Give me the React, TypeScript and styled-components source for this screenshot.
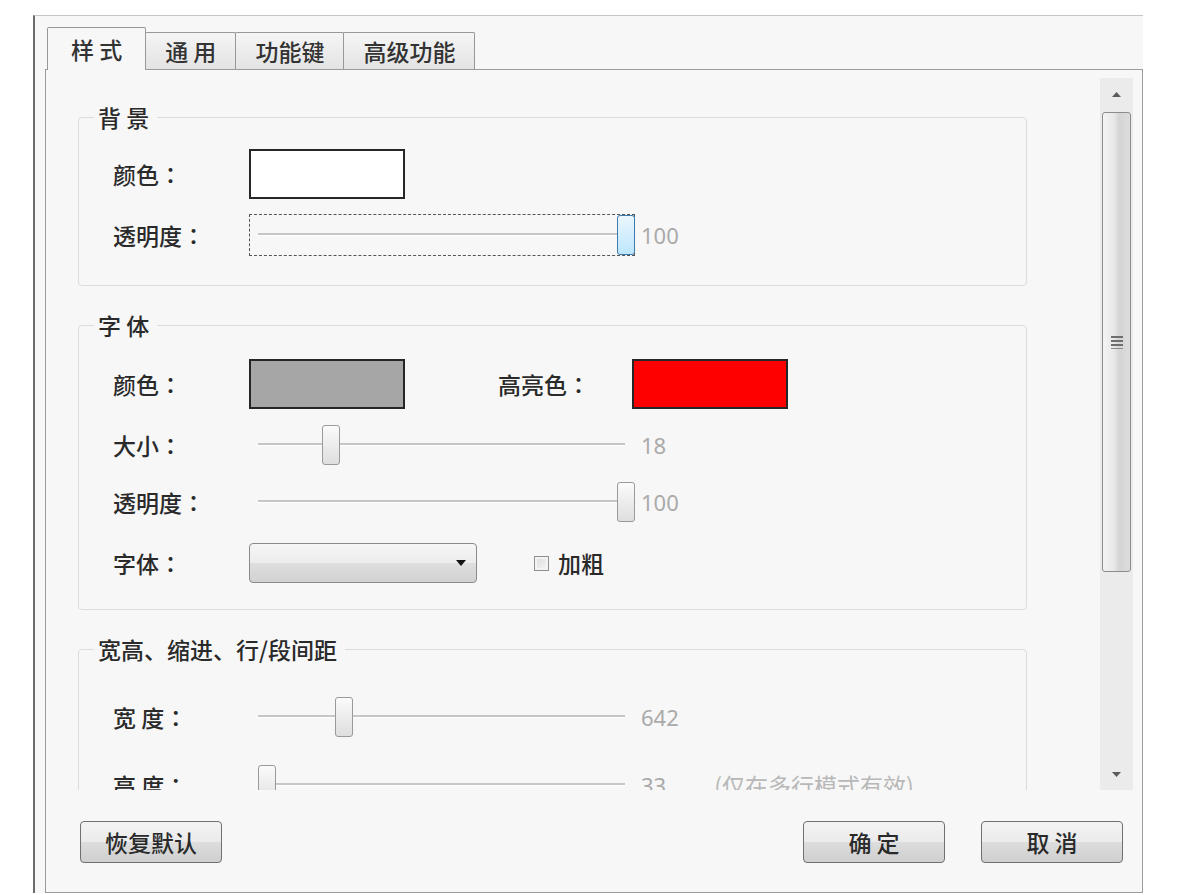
import styled, { createGlobalStyle } from "styled-components";

const GlobalStyle=createGlobalStyle`
    *{
        box-sizing: border-box;
    }
    html, body{
        margin: 0;
        padding: 0;
        background: #fff;
    }
    body{
        font-family: "Noto Sans CJK SC", "Noto Sans", sans-serif;
        color: #2a2a2a;
    }
`;

const Page=styled.div`
    width: 1179px;
    height: 895px;
    padding: 15px 0 0 33px;
    overflow: hidden;
`;

const Window=styled.div`
    width: 1110px;
    height: 878px;
    background: #f7f7f7;
    border-left: 2px solid #6a6a6a;
    border-top: 1px solid #c6c6c6;
    padding: 11px 0 0 10px;
    display: flex;
    flex-direction: column;
`;

const TabBar=styled.div`
    display: flex;
    align-items: flex-end;
    height: 43px;
    margin-bottom: -1px;
    padding-left: 2px;
`;

const Tab=styled.div<{ $active?: boolean }>`
    height: ${(p)=>p.$active ? "43px" : "37px"};
    margin-bottom: ${(p)=>p.$active ? "0" : "1px"};
    margin-left: ${(p)=>p.$active ? "0" : "-1px"};
    padding: 0 ${(p)=>p.$active ? "23px" : "19px"};
    border: 1px solid #989898;
    border-bottom: none;
    border-radius: 2px 2px 0 0;
    background: ${(p)=>p.$active ? "#f7f7f7" : "linear-gradient(#f5f5f5, #e3e3e3)"};
    position: relative;
    z-index: ${(p)=>p.$active ? 2 : 1};
    display: flex;
    align-items: center;
    font-size: 23px;
    font-weight: 500;
    color: #333;
    white-space: pre;
`;

const Panel=styled.div`
    flex: 1;
    border: 1px solid #9b9b9b;
    background: #f7f7f7;
    display: flex;
    flex-direction: column;
`;

const ScrollRow=styled.div`
    display: flex;
    height: 712px;
    margin: 8px 9px 0 0;
`;

const ScrollContent=styled.div`
    flex: 1;
    overflow: hidden;
    padding: 24px 73px 0 32px;
    display: flex;
    flex-direction: column;
    gap: 24px;
`;

const Group=styled.fieldset<{ $pt: number; $pb: number; $gap: number }>`
    margin: 0;
    min-width: 0;
    flex-shrink: 0;
    padding: ${(p)=>p.$pt}px 20px ${(p)=>p.$pb}px 34px;
    border: 1px solid #dcdcdc;
    border-radius: 4px;
    display: flex;
    flex-direction: column;
    gap: ${(p)=>p.$gap}px;
`;

const Legend=styled.legend`
    margin-left: -19px;
    padding: 0 8px 0 4px;
    font-size: 23px;
    font-weight: 500;
    line-height: 30px;
    color: #2a2a2a;
    white-space: pre;
`;

const Row=styled.div<{ $h: number }>`
    display: flex;
    align-items: center;
    height: ${(p)=>p.$h}px;
`;

const LabelText=styled.span<{ $w?: number; $ml?: number }>`
    width: ${(p)=>p.$w ?? 136}px;
    margin-left: ${(p)=>p.$ml ?? 0}px;
    flex-shrink: 0;
    font-size: 23px;
    font-weight: 500;
    color: #2a2a2a;
    white-space: pre;
`;

// 全角冒号居中显示
const Colon=styled.span`
    font-family: "Noto Sans CJK TC", "Noto Sans CJK SC", sans-serif;
`;

const ColorBox=styled.div<{ $color: string }>`
    width: 156px;
    height: 50px;
    flex-shrink: 0;
    border: 2px solid #262626;
    background: ${(p)=>p.$color};
`;

const SliderBox=styled.div<{ $focus?: boolean }>`
    position: relative;
    width: 386px;
    height: 42px;
    flex-shrink: 0;
    outline: ${(p)=>p.$focus ? "1px dashed #555" : "none"};
    outline-offset: -1px;
`;

const Track=styled.div`
    position: absolute;
    left: 9px;
    right: 10px;
    top: 19px;
    height: 2px;
    background: #c6c6c6;
    box-shadow: 0 1px 0 #fff;
`;

const Thumb=styled.div<{ $focus?: boolean }>`
    position: absolute;
    top: 1px;
    width: 18px;
    height: 40px;
    border: 1px solid ${(p)=>p.$focus ? "#3d7bad" : "#9a9a9a"};
    border-radius: 3px;
    background: ${(p)=>p.$focus
        ? "linear-gradient(#eaf6fd, #bee6fd)"
        : "linear-gradient(#fbfbfb, #dedede)"};
`;

const Value=styled.span`
    margin-left: 6px;
    font-family: "Noto Sans", "Open Sans", sans-serif;
    font-size: 22px;
    color: #aaa;
`;

const Hint=styled.span`
    margin-left: 48px;
    font-size: 23px;
    color: #b8b8b8;
`;

const Select=styled.div`
    width: 228px;
    height: 40px;
    flex-shrink: 0;
    border: 1px solid #8a8a8a;
    border-radius: 4px;
    background: linear-gradient(#f6f6f6 0%, #ececec 50%, #dedede 51%, #d2d2d2 100%);
    display: flex;
    align-items: center;
    justify-content: flex-end;
    padding-right: 10px;
`;

const Check=styled.div`
    width: 15px;
    height: 15px;
    margin-left: 57px;
    border: 1px solid #8f8f8f;
    background: linear-gradient(135deg, #dcdcdc, #f6f6f6);
    box-shadow: inset 0 0 0 2px #f4f4f4;
`;

const CheckText=styled.span`
    margin-left: 9px;
    font-size: 23px;
    font-weight: 500;
    color: #2a2a2a;
`;

const ScrollBar=styled.div`
    width: 33px;
    background: #ebebeb;
    display: flex;
    flex-direction: column;
`;

const ScrollBtn=styled.div`
    height: 32px;
    flex-shrink: 0;
    display: flex;
    align-items: center;
    justify-content: center;
`;

const ScrollThumb=styled.div`
    height: 460px;
    margin: 2px 2px 0;
    border: 1px solid #8c8c8c;
    border-radius: 3px;
    background: linear-gradient(to right, #f4f4f4, #e8e8e8 40%, #d4d4d4 60%, #dddddd);
    display: flex;
    align-items: center;
    justify-content: center;
`;

const ScrollTrack=styled.div`
    flex: 1;
`;

const Footer=styled.div`
    display: flex;
    justify-content: space-between;
    padding: 31px 19px 0 34px;
`;

const ButtonGroup=styled.div`
    display: flex;
    gap: 36px;
`;

const Button=styled.button`
    width: 142px;
    height: 42px;
    padding: 0;
    border: 1px solid #707070;
    border-radius: 4px;
    background: linear-gradient(#f3f3f3 0%, #ebebeb 50%, #dddddd 51%, #cfcfcf 100%);
    font-family: inherit;
    font-size: 23px;
    font-weight: 500;
    color: #2a2a2a;
    white-space: pre;
`;

interface ILabel{
    text: string,
    w?: number,
    ml?: number,
}

function Label({ text, w, ml }: ILabel){
    return (
        <LabelText $w={w} $ml={ml}>
            {text}<Colon>：</Colon>
        </LabelText>
    );
}

interface ISlider{
    value: number,
    pos: number,
    focus?: boolean,
}

function Slider({ value, pos, focus }: ISlider){
    return (
        <>
            <SliderBox $focus={focus}>
                <Track />
                <Thumb $focus={focus} style={{ left: `${9+pos*359}px` }} />
            </SliderBox>
            <Value>{value}</Value>
        </>
    );
}

function Arrow({ down, big }: { down?: boolean, big?: boolean }){
    const w=big ? 10 : 9;
    const h=big ? 6 : 5;
    return (
        <svg width={w} height={h} viewBox={`0 0 ${w} ${h}`}>
            <polygon
                points={down ? `0,0 ${w},0 ${w/2},${h}` : `0,${h} ${w},${h} ${w/2},0`}
                fill={big ? "#111" : "#5c5c5c"}
            />
        </svg>
    );
}

function App(){
    return (
        <Page>
            <GlobalStyle />
            <Window>
                <TabBar>
                    <Tab $active>样 式</Tab>
                    <Tab>通 用</Tab>
                    <Tab>功能键</Tab>
                    <Tab>高级功能</Tab>
                </TabBar>
                <Panel>
                    <ScrollRow>
                        <ScrollContent>
                            <Group $pt={17} $pb={29} $gap={15}>
                                <Legend>背 景</Legend>
                                <Row $h={50}>
                                    <Label text="颜色" />
                                    <ColorBox $color="#ffffff" />
                                </Row>
                                <Row $h={42}>
                                    <Label text="透明度" />
                                    <Slider value={100} pos={1} focus />
                                </Row>
                            </Group>
                            <Group $pt={19} $pb={21} $gap={15}>
                                <Legend>字 体</Legend>
                                <Row $h={50}>
                                    <Label text="颜色" />
                                    <ColorBox $color="#a6a6a6" />
                                    <Label text="高亮色" w={134} ml={93} />
                                    <ColorBox $color="#ff0000" />
                                </Row>
                                <Row $h={42}>
                                    <Label text="大小" />
                                    <Slider value={18} pos={0.178} />
                                </Row>
                                <Row $h={42}>
                                    <Label text="透明度" />
                                    <Slider value={100} pos={1} />
                                </Row>
                                <Row $h={50}>
                                    <Label text="字体" />
                                    <Select><Arrow down big /></Select>
                                    <Check />
                                    <CheckText>加粗</CheckText>
                                </Row>
                            </Group>
                            <Group $pt={32} $pb={20} $gap={26}>
                                <Legend>宽高、缩进、行/段间距</Legend>
                                <Row $h={42}>
                                    <Label text="宽 度" />
                                    <Slider value={642} pos={0.214} />
                                </Row>
                                <Row $h={42}>
                                    <Label text="高 度" />
                                    <Slider value={33} pos={0} />
                                    <Hint>(仅在多行模式有效)</Hint>
                                </Row>
                            </Group>
                        </ScrollContent>
                        <ScrollBar>
                            <ScrollBtn><Arrow /></ScrollBtn>
                            <ScrollThumb>
                                <svg width="12" height="14" viewBox="0 0 12 14">
                                    <rect x="0" y="1" width="12" height="2" fill="#6e6e6e" />
                                    <rect x="0" y="5" width="12" height="2" fill="#6e6e6e" />
                                    <rect x="0" y="9" width="12" height="2" fill="#6e6e6e" />
                                    <rect x="0" y="13" width="12" height="1" fill="#8a8a8a" />
                                </svg>
                            </ScrollThumb>
                            <ScrollTrack />
                            <ScrollBtn><Arrow down /></ScrollBtn>
                        </ScrollBar>
                    </ScrollRow>
                    <Footer>
                        <Button>恢复默认</Button>
                        <ButtonGroup>
                            <Button>确 定</Button>
                            <Button>取 消</Button>
                        </ButtonGroup>
                    </Footer>
                </Panel>
            </Window>
        </Page>
    );
}

export default App;
